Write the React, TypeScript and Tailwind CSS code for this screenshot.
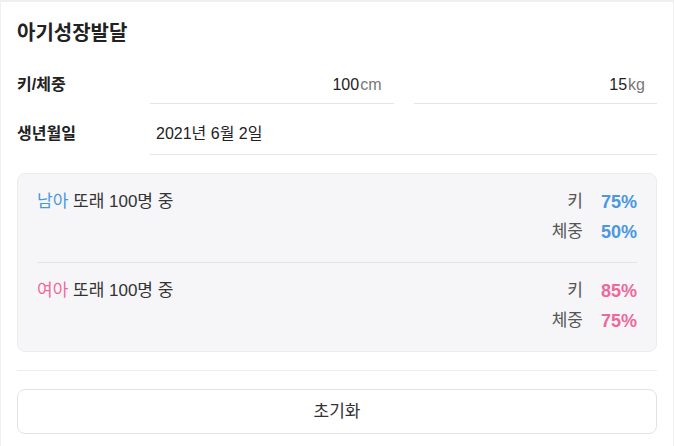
const FONT = "font-['Liberation_Sans','Noto_Sans_CJK_KR',sans-serif]";

type Stat = { label: string; value: string };

const GROUPS: { name: string; color: string; stats: Stat[] }[] = [
  {
    name: '남아',
    color: 'text-[#4a98e0]',
    stats: [
      { label: '키', value: '75%' },
      { label: '체중', value: '50%' },
    ],
  },
  {
    name: '여아',
    color: 'text-[#f0689a]',
    stats: [
      { label: '키', value: '85%' },
      { label: '체중', value: '75%' },
    ],
  },
];

function UnitInput({ value, unit }: { value: string; unit: string }) {
  return (
    <div className="flex-1 h-[38px] border-b border-[#e6e6e6] flex items-center justify-end pr-[12px] text-[16px] text-[#222]">
      <span>{value}</span>
      <span className="ml-[1px] text-[#777]">{unit}</span>
    </div>
  );
}

export default function App() {
  return (
    <div className={`min-h-screen bg-[#efefef] pt-[2px] px-px ${FONT}`}>
      <div className="bg-white px-[16px] pt-[18px] pb-[12px] min-h-[444px]">
        <h1 className="text-[20px] font-bold text-[#222] leading-[26px]">아기성장발달</h1>

        {/* height / weight */}
        <div className="flex items-center mt-[20px]">
          <div className="w-[133px] text-[16px] font-bold text-[#222]">키/체중</div>
          <div className="flex-1 flex gap-[20px]">
            <UnitInput value="100" unit="cm" />
            <UnitInput value="15" unit="kg" />
          </div>
        </div>

        {/* birthday */}
        <div className="flex items-center mt-[9px]">
          <div className="w-[133px] text-[16px] font-bold text-[#222]">생년월일</div>
          <div className="flex-1 h-[42px] border-b border-[#e6e6e6] flex items-center pl-[6px] text-[16px] text-[#222]">
            2021년 6월 2일
          </div>
        </div>

        {/* percentile box */}
        <div className="mt-[18px] rounded-[8px] border border-[#ececef] bg-[#f6f6f8] px-[19px]">
          {GROUPS.map((g, i) => (
            <div
              key={g.name}
              className={`flex justify-between pt-[16px] pb-[18px] ${i > 0 ? 'border-t border-[#e4e4e8]' : ''}`}
            >
              <div className="text-[17px] text-[#333] leading-[24px]">
                <span className={g.color}>{g.name}</span> 또래 100명 중
              </div>
              <div className="flex flex-col gap-[6px]">
                {g.stats.map((s) => (
                  <div key={s.label} className="flex items-center justify-end leading-[24px]">
                    <span className="text-[17px] text-[#555]">{s.label}</span>
                    <span className={`w-[54px] text-right text-[18px] font-bold ${g.color}`}>{s.value}</span>
                  </div>
                ))}
              </div>
            </div>
          ))}
        </div>

        <div className="mt-[18px] border-t border-[#ececec]" />

        <button className="mt-[18px] w-full h-[45px] rounded-[8px] border border-[#e3e3e3] bg-white text-[17px] text-[#333]">
          초기화
        </button>
      </div>
    </div>
  );
}
